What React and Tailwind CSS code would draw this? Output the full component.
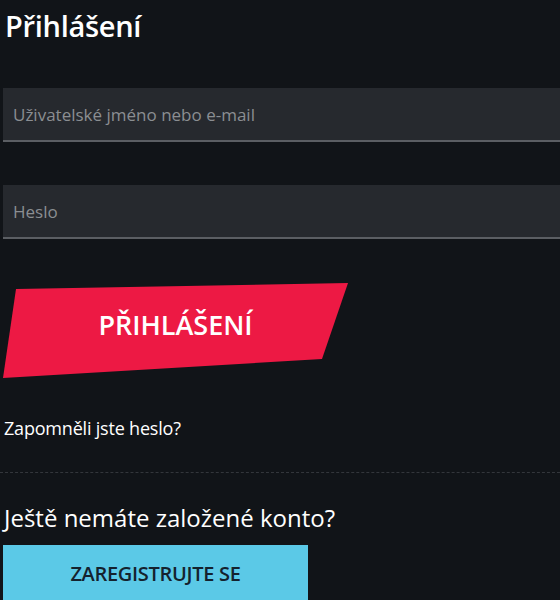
export default function App() {
  return (
    <div className="min-h-[600px] h-[600px] overflow-hidden bg-[#111418] text-white font-['Open_Sans',sans-serif]">
      <h1 className="pl-[5px] pt-[6px] text-[29px] font-semibold leading-[40px] tracking-[-0.3px]">
        Přihlášení
      </h1>

      {/* Inputs */}
      <div className="mt-[42px] pl-[3px] space-y-[43px]">
        <input
          type="text"
          placeholder="Uživatelské jméno nebo e-mail"
          className="block w-full h-[54px] bg-[#26292e] border-b-2 border-[#5b5e63] px-[10px] text-[17px] outline-none placeholder:text-[#8b8e92]"
        />
        <input
          type="password"
          placeholder="Heslo"
          className="block w-full h-[54px] bg-[#26292e] border-b-2 border-[#5b5e63] px-[10px] text-[17px] outline-none placeholder:text-[#8b8e92]"
        />
      </div>

      {/* Login button */}
      <div className="mt-[44px] pl-[3px]">
        <button className="w-[345px] h-[95px] bg-[#ed1944] [clip-path:polygon(13px_6px,345px_0,319px_76px,0_95px)] text-white text-[27px] font-semibold flex items-center justify-center pb-[10px]">
          PŘIHLÁŠENÍ
        </button>
      </div>

      <a className="block mt-[36px] pl-[4px] text-[18px] leading-[28px] tracking-[-0.2px]">
        Zapomněli jste heslo?
      </a>

      <div className="mt-[30px] border-t border-dashed border-[#33363b]" />

      <p className="mt-[28px] pl-[4px] text-[24px] leading-[34px]">
        Ještě nemáte založené konto?
      </p>

      <button className="mt-[10px] ml-[3px] w-[305px] h-[60px] bg-[#5bc9e7] text-[#14222e] text-[20px] font-semibold tracking-[-0.3px] flex items-center justify-center pb-[2px]">
        ZAREGISTRUJTE SE
      </button>
    </div>
  )
}
